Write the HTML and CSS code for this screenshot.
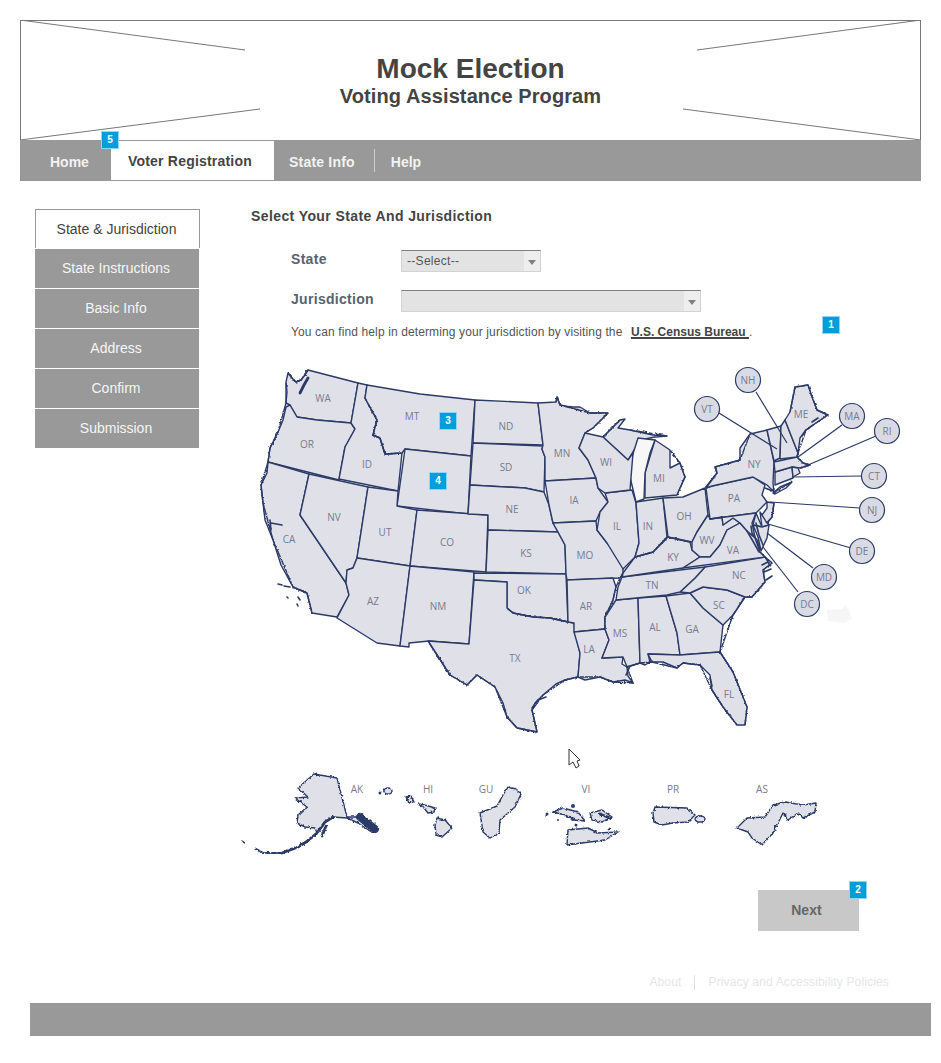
FILE: index.html
```html
<!DOCTYPE html>
<html lang="en">
<head>
  <meta charset="utf8"/>
  <meta name="viewport" content="width=device-width"/>
  <title>Mock Election - Voting Assistance Program</title>
  <link rel="stylesheet" href="styles.css">
</head>
<body>
  <header class="banner">
    <svg class="banner-lines" viewBox="0 0 901 120" aria-hidden="true">
      <line x1="0" y1="0" x2="225" y2="30"/>
      <line x1="0" y1="120" x2="240" y2="89"/>
      <line x1="901" y1="0" x2="677" y2="30"/>
      <line x1="901" y1="120" x2="663" y2="89"/>
    </svg>
    <h1>Mock Election</h1>
    <h2>Voting Assistance Program</h2>
  </header>
  <nav class="topnav">
    <span class="badge badge-5">5</span>
    <a class="tab-home">Home</a>
    <a class="tab-active">Voter Registration</a>
    <a class="tab-state">State Info</a>
    <span class="tab-sep"></span>
    <a class="tab-help">Help</a>
  </nav>

  <div class="main">
    <ul class="steps">
      <li class="current">State &amp; Jurisdiction</li>
      <li>State Instructions</li>
      <li>Basic Info</li>
      <li>Address</li>
      <li>Confirm</li>
      <li>Submission</li>
    </ul>

    <section class="content">
      <h3>Select Your State And Jurisdiction</h3>
      <div class="form-row">
        <label>State</label>
        <div class="select select-short"><span>--Select--</span><i></i></div>
      </div>
      <div class="form-row">
        <label>Jurisdiction</label>
        <div class="select select-long"><span></span><i></i></div>
      </div>
      <p class="help">You can find help in determing your jurisdiction by visiting the <a>U.S. Census Bureau </a>.</p>
      <span class="badge badge-1">1</span>

      <div class="map">
        <svg viewBox="240 360 670 500" width="670" height="500">
          <defs>
            <filter id="rough" x="-5%" y="-5%" width="110%" height="110%">
              <feTurbulence type="fractalNoise" baseFrequency="0.4" numOctaves="2" seed="3"/>
              <feDisplacementMap in="SourceGraphic" scale="3" xChannelSelector="R" yChannelSelector="G"/>
            </filter>
          </defs>

          <g class="states">
            <polygon points="288,373 292,378 296,382 301,380 304,376 308,370 358,383 351,423 317,420 297,417 290,405 286,403 287,392 286,382"/>
            <polygon points="290,405 297,417 317,420 351,423 355,429 345,447 339,480 268,462 270,448 278,432 283,420 286,407"/>
            <polygon points="358,383 367,385 365,398 377,420 373,435 380,438 385,454 402,453 398,491 339,479 345,447 355,429 351,423"/>
            <polygon points="367,385 420,394 475,400 471,456 405,449 402,453 385,454 380,438 373,435 377,420 365,398"/>
            <polygon points="405,449 471,456 468,514 397,506"/>
            <polygon points="268,462 309,474 300,515 346,583 349,595 337,617 312,613 307,593 293,587 281,565 273,540 265,520 263,503 261,485 267,473"/>
            <polygon points="309,474 368,487 357,558 353,568 347,570 346,583 300,515"/>
            <polygon points="368,487 398,491 397,506 417,510 410,566 357,558"/>
            <polygon points="417,510 488,515 486,572 410,566"/>
            <polygon points="357,558 410,566 400,646 377,643 337,618 349,595 346,583 347,570 353,568"/>
            <polygon points="410,566 474,572 469,644 429,641 409,643 409,647 400,646"/>
            <polygon points="475,400 538,403 543,445 473,443"/>
            <polygon points="473,443 543,446 542,449 545,457 544,492 525,488 470,485"/>
            <polygon points="470,485 525,488 544,492 549,505 553,523 558,532 488,530 488,515 468,514"/>
            <polygon points="488,530 558,532 565,545 566,574 486,572"/>
            <polygon points="474,573 566,574 568,622 550,618 533,617 513,613 507,608 507,582 474,580"/>
            <polygon points="474,580 507,582 507,608 513,613 533,617 550,618 568,622 574,623 575,632 580,653 578,677 565,680 556,684 543,695 535,703 532,710 537,732 517,728 507,717 503,703 495,687 477,675 467,685 450,675 428,641 469,644"/>
            <polygon points="538,403 556,402 557,397 560,405 570,407 580,407 590,413 608,413 593,428 585,433 579,448 588,460 596,478 545,481 545,457 542,449 543,445"/>
            <polygon points="545,481 596,478 598,488 608,502 600,512 596,521 553,523 549,505"/>
            <polygon points="553,523 596,521 597,530 607,543 623,563 623,573 620,578 567,580 566,574 565,545 558,532"/>
            <polygon points="567,580 613,578 616,587 613,600 605,617 605,629 574,632 574,623 568,622"/>
            <polygon points="574,632 605,629 609,640 602,658 623,657 622,664 627,667 628,676 633,683 625,680 613,682 600,677 585,680 578,677 580,653"/>
            <polygon points="616,600 638,598 640,663 627,667 623,657 602,658 609,640 605,629 605,617"/>
            <polygon points="638,598 666,596 677,633 680,655 648,654 650,662 645,665 640,663"/>
            <polygon points="666,596 690,593 703,608 723,625 720,652 680,655 677,633"/>
            <polygon points="648,654 680,655 720,652 733,672 747,707 745,725 737,725 723,707 712,690 710,675 700,665 683,663 677,668 663,662 652,662"/>
            <polygon points="690,593 703,587 727,590 745,597 733,615 723,625 703,608"/>
            <polygon points="680,592 695,578 705,567 765,557 772,563 763,570 765,582 752,597 745,597 727,590 703,587 690,593"/>
            <polygon points="622,577 705,567 695,578 680,592 667,595 616,600 618,587"/>
            <polygon points="623,573 635,557 653,552 668,537 690,542 692,550 700,557 683,568 622,577"/>
            <polygon points="605,493 632,490 636,503 639,543 635,557 623,569 607,543 597,530 600,512 608,502"/>
            <polygon points="636,502 663,498 667,537 653,552 635,557 639,543"/>
            <polygon points="663,498 683,497 705,488 708,515 697,532 692,542 668,537"/>
            <polygon points="645,498 677,495 685,477 680,463 670,468 670,450 655,440 652,450 645,473"/>
            <polygon points="603,437 620,420 625,419 618,428 630,430 653,435 667,436 655,437 640,440 628,460"/>
            <polygon class="lake" points="638,438 655,440 650,453 645,473 644,499 636,502 630,477 632,457"/>
            <polygon points="585,433 603,437 628,460 633,453 630,490 605,493 598,488 596,478 588,460 579,448"/>
            <polygon points="708,515 710,519 722,517 723,525 733,518 740,523 727,530 720,545 710,557 700,557 692,550 692,542 697,532"/>
            <polygon points="740,523 748,532 755,538 760,552 765,557 683,568 700,557 710,557 720,545 727,530"/>
            <polygon points="706,488 712,486 753,477 765,485 762,495 767,502 756,513 710,519"/>
            <polygon points="712,486 706,488 717,473 715,467 740,460 740,448 750,434 767,430 774,462 773,483 774,492 767,485 753,477"/>
            <polygon points="710,519 756,513 752,523 755,537 748,532 740,523 733,518 723,525 722,517"/>
            <polygon points="756,513 762,527 753,525"/>
            <polygon points="760,512 769,525 762,527"/>
            <polygon points="753,525 762,527 769,525 767,538 761,551 758,537"/>
            <polygon points="767,502 774,503 772,517 767,523 762,515 767,508"/>
            <polygon points="775,472 792,467 793,478 775,485"/>
            <polygon points="774,462 797,457 803,463 810,465 800,468 792,467 775,472"/>
            <polygon points="792,467 798,468 800,473 793,477"/>
            <polygon points="767,430 781,426 780,458 774,461"/>
            <polygon points="781,426 785,420 798,453 797,457 780,459"/>
            <polygon points="785,420 790,412 795,387 808,385 812,397 817,410 828,415 813,425 806,430 800,438 798,453"/>
            <polygon points="773,493 780,487 792,482 786,488 775,494"/>
          </g>

          <g class="rough">
            <path d="M288,373 L292,378 L296,382 L301,380 L304,376 L308,370 M286,382 L286,403 L278,432 L270,448 L268,462 L261,485 L263,503 L273,540 L293,587 L307,593 L312,613"/>
            <path d="M537,732 L532,710 L543,695 L565,680 L578,677 L600,677 L613,682 L633,683 L627,667 L640,663 L652,662 L677,668 L683,663 L700,665 L712,690 L723,707 L737,725"/>
            <path d="M745,725 L747,707 L733,672 L720,652 L733,615 L745,597 L752,597 L765,582 L763,570 L772,563 L765,557 L760,552"/>
            <path d="M774,503 L772,517 L767,523 M773,493 L792,482 M800,468 L810,465 L803,463 L797,457 L798,453 L806,430 L813,425 L828,415 L817,410 L808,385 L795,387 L790,412"/>
            <path d="M556,402 L557,397 L560,405 L590,413 L608,413 L593,428 L585,433 M603,437 L620,420 M630,430 L667,436 M670,450 L680,463 L685,477 L677,495 M705,488 L717,473 L715,467 L740,460 L750,434"/>
            <path d="M623,573 L620,578 L616,587 L613,600 L605,617 L605,629 M428,641 L450,675 L467,685 L477,675 L495,687 L507,717 L517,728 L537,732"/>
            <path d="M507,608 L513,613 L533,617 L550,618 L568,622 M635,557 L653,552 L668,537 L690,542 M365,398 L377,420 L373,435 L380,438 L385,454 L402,453"/>
          </g>

          <g class="coast">
            <path class="thick-2" d="M300,393 L304,385 L308,378"/>
            <path d="M751,526 L752,533 L757,540 L760,549 M747,531 L754,543 L759,552 M756,523 L759,535 L763,545 M766,558 L770,566"/>
            <path d="M771,569 L764,572 M772,576 L766,580 M762,565 L768,562"/>
            <path d="M813,425 L808,429 M806,430 L802,436 M818,418 L812,422"/>
            <path d="M270,520 L271,530 M271,523 L282,525"/>
            <path d="M278,584 L282,585 M284,586 L290,587 M287,597 L288,598 M298,597 L300,600 M297,604 L298,606"/>
            <path d="M630,666 L626,675 M532,708 L538,700 L546,697"/>
            <path d="M710,678 L712,686 M765,488 L770,490 M771,491 L774,489"/>
          </g>

          <g class="leaders">
            <line x1="756" y1="392" x2="787" y2="443"/>
            <line x1="719" y1="413" x2="777" y2="449"/>
            <line x1="842" y1="425" x2="798" y2="457"/>
            <line x1="876" y1="436" x2="808" y2="465"/>
            <line x1="862" y1="476" x2="792" y2="477"/>
            <line x1="860" y1="508" x2="770" y2="502"/>
            <line x1="851" y1="548" x2="768" y2="524"/>
            <line x1="813" y1="568" x2="767" y2="533"/>
            <line x1="798" y1="592" x2="763" y2="547"/>
          </g>
          <g class="bubbles">
            <circle cx="748" cy="380" r="12.5"/>
            <circle cx="707" cy="409" r="12.5"/>
            <circle cx="852" cy="416" r="12.5"/>
            <circle cx="887" cy="431" r="12.5"/>
            <circle cx="874" cy="476" r="12.5"/>
            <circle cx="872" cy="510" r="12.5"/>
            <circle cx="862" cy="551" r="12.5"/>
            <circle cx="824" cy="577" r="12.5"/>
            <circle cx="807" cy="604" r="12.5"/>
          </g>
          <path class="smudge" d="M827,610 L842,609 L845,606 L849,610 L852,618 L845,623 L828,621 Z"/>

          <g class="isles-group">
            <g class="states">
              <polygon points="314,774 337,778 347,817 357,817 377,828 373,833 358,823 347,818 333,817 325,822 317,833 315,828 305,827 297,823 298,815 307,807 295,798 308,797 298,788"/>
              <ellipse cx="388" cy="791" rx="4" ry="3"/>
              <polygon points="406,797 411,796 414,802 409,803"/>
              <polygon points="418,804 425,805 435,808 434,812 428,813 424,808"/>
              <polygon points="437,818 445,820 452,828 442,837 436,835 435,825"/>
              <polygon points="508,787 516,789 521,794 515,807 500,820 499,833 490,838 483,832 480,813 497,806 503,795"/>
              <polygon points="553,812 563,808 578,812 585,821 573,820 565,815"/>
              <polygon points="590,813 602,810 612,817 602,822 592,820"/>
              <polygon points="568,830 588,828 598,833 618,832 605,840 582,843 567,845"/>
              <polygon points="655,807 687,808 695,815 688,822 673,823 662,825 654,822 653,813"/>
              <ellipse cx="700" cy="819" rx="5" ry="3"/>
              <polygon points="737,828 747,818 765,817 773,805 785,802 803,805 816,803 815,812 803,818 798,813 788,820 783,813 773,833 762,845 752,838 748,832"/>
            </g>
            <g class="coast">
              <path class="thick" d="M360,817 L375,829"/>
              <path class="thick-2" d="M333,817 L325,822 L317,833 L306,842 L298,847 L282,853"/>
              <path class="dots" d="M282,853 L263,853 L254,848"/>
              <path class="thick-2" d="M326,826 L322,836"/>
              <path d="M243,841 L244,843"/>
              <path class="thick-2" d="M566,816 L574,819 M600,814 L610,818"/>
            </g>
            <g class="isles">
              <circle cx="380" cy="793" r="1.5"/>
              <circle cx="547" cy="814" r="1.5"/>
              <circle cx="558" cy="820" r="1"/>
              <circle cx="576" cy="825" r="1.5"/>
              <circle cx="609" cy="829" r="1.5"/>
              <circle cx="573" cy="806" r="2"/>
              <circle cx="775" cy="827" r="1.5"/>
              <circle cx="785" cy="815" r="1.5"/>
            </g>
          </g>

          <path class="pointer" d="M569,749 L569,765 L573,762 L576,768 L579,766 L577,761 L580,760 Z"/>

          <g class="labels">
            <text x="323" y="402">WA</text><text x="307" y="448">OR</text><text x="367" y="468">ID</text>
            <text x="412" y="420">MT</text><text x="506" y="430">ND</text><text x="506" y="471">SD</text>
            <text x="562" y="457">MN</text><text x="438" y="486">WY</text><text x="334" y="521">NV</text>
            <text x="385" y="536">UT</text><text x="447" y="546">CO</text><text x="289" y="543">CA</text>
            <text x="373" y="605">AZ</text><text x="438" y="610">NM</text><text x="512" y="513">NE</text>
            <text x="526" y="557">KS</text><text x="524" y="594">OK</text><text x="515" y="662">TX</text>
            <text x="574" y="504">IA</text><text x="585" y="559">MO</text><text x="586" y="610">AR</text>
            <text x="589" y="653">LA</text><text x="620" y="637">MS</text><text x="655" y="631">AL</text>
            <text x="692" y="633">GA</text><text x="729" y="698">FL</text><text x="719" y="609">SC</text>
            <text x="739" y="579">NC</text><text x="652" y="589">TN</text><text x="673" y="561">KY</text>
            <text x="733" y="554">VA</text><text x="707" y="544">WV</text><text x="684" y="520">OH</text>
            <text x="648" y="530">IN</text><text x="617" y="530">IL</text><text x="659" y="482">MI</text>
            <text x="606" y="466">WI</text><text x="754" y="468">NY</text><text x="734" y="502">PA</text>
            <text x="801" y="418">ME</text>
            <text x="748" y="384">NH</text><text x="707" y="413">VT</text><text x="852" y="420">MA</text>
            <text x="887" y="435">RI</text><text x="874" y="480">CT</text><text x="872" y="514">NJ</text>
            <text x="862" y="555">DE</text><text x="824" y="581">MD</text><text x="807" y="608">DC</text>
            <text x="357" y="793">AK</text><text x="428" y="793">HI</text><text x="486" y="793">GU</text>
            <text x="586" y="793">VI</text><text x="673" y="793">PR</text><text x="762" y="793">AS</text>
          </g>
        </svg>
        <span class="badge badge-3">3</span>
        <span class="badge badge-4">4</span>
      </div>

      <div class="actions">
        <button class="next">Next<span class="badge badge-2">2</span></button>
      </div>
      <div class="links">
        <a>About</a>
        <span class="links-sep"></span>
        <a>Privacy and Accessibility Policies</a>
      </div>
    </section>
  </div>

  <footer class="footer-bar"></footer>
</body>
</html>
```

FILE: styles.css
```css
body { margin: 0; background: #fff; color: #444; font-family: "Liberation Sans", Arial, sans-serif; }

/* banner */
.banner { position: relative; box-sizing: border-box; width: 901px; height: 120px; margin: 20px 0 0 20px; border: 1px solid #777; border-bottom: 0; text-align: center; }
.banner-lines { position: absolute; left: -1px; top: -1px; width: 901px; height: 120px; }
.banner-lines line { stroke: #777; stroke-width: 1; }
.banner h1 { margin: 0; padding-top: 32px; font-size: 28px; line-height: 32px; font-weight: bold; color: #444; }
.banner h2 { margin: 0; font-size: 20px; line-height: 22px; font-weight: bold; color: #444; letter-spacing: 0.1px; }

/* top nav */
.topnav { position: relative; display: flex; align-items: center; width: 901px; height: 41px; margin-left: 20px; background: #999; font-size: 14px; font-weight: bold; color: #f2f2f2; letter-spacing: 0.2px; }
.topnav a { display: block; }
.tab-home { box-sizing: border-box; width: 91px; padding: 3px 0 0 30px; letter-spacing: 0; }
.tab-active { box-sizing: border-box; width: 163px; height: 39px; padding: 12px 0 0 17px; background: #fff; color: #444; }
.tab-state { padding: 3px 19px 0 15px; }
.tab-sep { width: 1px; height: 23px; background: #ccc; }
.tab-help { padding: 3px 0 0 16px; letter-spacing: 0; }

/* badges */
.badge { position: absolute; box-sizing: border-box; width: 18px; height: 18px; border: 1px solid #8fd6f2; background: #009fdb; color: #fff; font: bold 10px/16px "Liberation Sans", Arial, sans-serif; text-align: center; letter-spacing: 0; }
.badge-5 { left: 81px; top: -9px; }
.badge-1 { left: 582px; top: 108px; }
.badge-3 { left: 199px; top: 52px; }
.badge-4 { left: 189px; top: 112px; }
.badge-2 { right: -8px; top: -9px; }

/* main area */
.main { display: flex; align-items: flex-start; padding-top: 27px; }

.steps { list-style: none; margin: 1px 40px 0 35px; padding: 0; width: 165px; flex: none; }
.steps li { box-sizing: border-box; width: 164px; height: 39px; margin-bottom: 1px; padding-right: 2px; background: #999; color: #f5f5f5; font-size: 14px; line-height: 39px; text-align: center; }
.steps li.current { width: 165px; background: #fff; color: #444; border: 1px solid #999; border-bottom: 0; }

.content { position: relative; width: 691px; }
.content h3 { margin: 0 0 26px 11px; font-size: 14px; line-height: 16px; font-weight: bold; color: #444; letter-spacing: 0.4px; }

.form-row { display: flex; align-items: center; height: 22px; margin: 0 0 18px 51px; }
.form-row label { width: 110px; margin-top: -4px; font-size: 14px; font-weight: bold; color: #57646e; letter-spacing: 0.3px; }
.select { box-sizing: border-box; position: relative; display: flex; align-items: center; height: 22px; border: 1px solid #d2d2d2; border-top-color: #808080; background: #e3e3e3; font-size: 12px; color: #555; letter-spacing: 0.3px; }
.select span { padding-left: 5px; }
.select i { position: absolute; right: 0; top: 0; width: 16px; height: 20px; background: #eee; }
.select i::after { content: ""; position: absolute; left: 4px; top: 9px; border: 4px solid transparent; border-top: 5px solid #808080; border-bottom: 0; }
.select-short { width: 140px; }
.select-long { width: 300px; }

.help { margin: -6px 0 0 51px; font-size: 12px; line-height: 16px; color: #555; letter-spacing: 0.12px; }
.help a { margin-left: 5px; font-weight: bold; color: #444; text-decoration: underline; text-decoration-thickness: 2px; letter-spacing: 0; }

.map { position: relative; height: 500px; margin-top: 20px; }
.map svg { display: block; }

.states polygon, .states ellipse { fill: #e0e0e8; stroke: #2b3a67; stroke-width: 1.4; stroke-linejoin: round; }
.states polygon.lake { fill: #f7f7f7; }
.rough { filter: url(#rough); }
.rough path { fill: none; stroke: #2b3a67; stroke-width: 1.4; stroke-linejoin: round; }
.isles-group { filter: url(#rough); }
.coast path { fill: none; stroke: #2b3a67; stroke-width: 1.6; stroke-linecap: round; }
.coast path.thick { stroke-width: 8; }
.coast path.thick-2 { stroke-width: 2.8; }
.coast path.dots { stroke-width: 2.2; stroke-dasharray: 4 2; }
.leaders line { stroke: #2b3a67; stroke-width: 1.2; }
.bubbles circle { fill: #d9dae3; stroke: #2b3a67; stroke-width: 1.2; }
.isles circle { fill: #2b3a67; }
.smudge { fill: #f6f6f6; }
.pointer { fill: #fff; stroke: #333; stroke-width: 1; stroke-linejoin: round; }
.labels text { font-family: "Open Sans", sans-serif; font-size: 10px; fill: #777b8e; text-anchor: middle; }

.actions { display: flex; justify-content: flex-end; margin-top: 30px; padding-right: 72px; }
.next { position: relative; width: 101px; height: 41px; padding: 0 4px 2px 0; border: 0; background: #c8c8c8; color: #666; font: bold 14px "Liberation Sans", Arial, sans-serif; letter-spacing: 0.1px; }

.links { display: flex; justify-content: flex-end; align-items: center; height: 16px; margin-top: 43px; padding-right: 42px; font-size: 12px; color: #e6e6e6; letter-spacing: 0.15px; }
.links-sep { width: 1px; height: 15px; margin: 0 13px; background: #ddd; }

.footer-bar { width: 901px; height: 33px; margin: 13px 0 27px 30px; background: #999; }
```
